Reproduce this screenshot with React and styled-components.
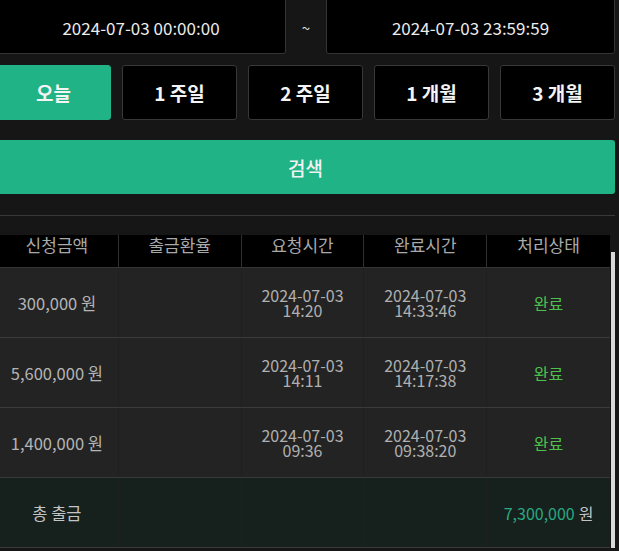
import { useLayoutEffect, useRef } from "react";
import styled, { createGlobalStyle } from "styled-components";

const GlobalStyle = createGlobalStyle`
  html, body {
    margin: 0;
    padding: 0;
    background: #161616;
    overflow: hidden;
  }
  body {
    font-family: "Noto Sans CJK KR", "Noto Sans", sans-serif;
    color: #d0d0d0;
  }
`;

const rows = [
  { amount: "300,000 원", reqDate: "2024-07-03", reqTime: "14:20", doneDate: "2024-07-03", doneTime: "14:33:46" },
  { amount: "5,600,000 원", reqDate: "2024-07-03", reqTime: "14:11", doneDate: "2024-07-03", doneTime: "14:17:38" },
  { amount: "1,400,000 원", reqDate: "2024-07-03", reqTime: "09:36", doneDate: "2024-07-03", doneTime: "09:38:20" },
];

const periods = ["오늘", "1 주일", "2 주일", "1 개월", "3 개월"];

function App() {
  const scrollRef = useRef(null);

  useLayoutEffect(() => {
    // the list is shown scrolled to its end
    if (scrollRef.current) {
      scrollRef.current.scrollTop = scrollRef.current.scrollHeight;
    }
  }, []);

  return (
    <Page>
      <GlobalStyle />
      <DateRow>
        <DateBox>2024-07-03 00:00:00</DateBox>
        <Tilde>~</Tilde>
        <DateBox>2024-07-03 23:59:59</DateBox>
      </DateRow>

      <PeriodRow>
        {periods.map((p, i) => (
          <PeriodButton key={p} $active={i === 0}>
            {p}
          </PeriodButton>
        ))}
      </PeriodRow>

      <SearchButton>검색</SearchButton>

      <Divider />

      <TableArea>
        <TableScroll ref={scrollRef}>
          <HeadRow>
            <HeadCell>신청금액</HeadCell>
            <HeadCell>출금환율</HeadCell>
            <HeadCell>요청시간</HeadCell>
            <HeadCell>완료시간</HeadCell>
            <HeadCell $last>처리상태</HeadCell>
          </HeadRow>

          {rows.map((r, i) => (
            <BodyRow key={i}>
              <Cell>{r.amount}</Cell>
              <Cell />
              <Cell>
                <TimeStack>
                  <span>{r.reqDate}</span>
                  <span>{r.reqTime}</span>
                </TimeStack>
              </Cell>
              <Cell>
                <TimeStack>
                  <span>{r.doneDate}</span>
                  <span>{r.doneTime}</span>
                </TimeStack>
              </Cell>
              <Cell $last>
                <Status>완료</Status>
              </Cell>
            </BodyRow>
          ))}

          <TotalRow>
            <Cell>
              <TotalLabel>총 출금</TotalLabel>
            </Cell>
            <Cell />
            <Cell />
            <Cell />
            <Cell $last>
              <TotalAmount>7,300,000</TotalAmount>
              <Won>원</Won>
            </Cell>
          </TotalRow>
          <EndSpace />
        </TableScroll>

        <ScrollTrack>
          <ScrollThumb />
        </ScrollTrack>
      </TableArea>
    </Page>
  );
}

export default App;

const Page = styled.div`
  width: 619px;
  margin-left: -4px;
  margin-top: -4px;
  display: flex;
  flex-direction: column;
`;

const DateRow = styled.div`
  display: grid;
  grid-template-columns: 290px 40px 1fr;
  height: 58px;
`;

const DateBox = styled.div`
  display: flex;
  align-items: center;
  justify-content: center;
  padding-top: 5px;
  box-sizing: border-box;
  background: #000;
  border: 1px solid #343434;
  border-radius: 3px;
  color: #ececec;
  font-size: 17px;
`;

const Tilde = styled.div`
  display: flex;
  align-items: center;
  justify-content: center;
  padding-top: 5px;
  color: #e0e0e0;
  font-size: 15px;
`;

const PeriodRow = styled.div`
  display: grid;
  grid-template-columns: repeat(5, 1fr);
  gap: 11px;
  margin-top: 11px;
`;

const PeriodButton = styled.button`
  height: 55px;
  border-radius: 3px;
  border: 1px solid ${(p) => (p.$active ? "#20b386" : "#383838")};
  background: ${(p) => (p.$active ? "#20b386" : "#000")};
  color: #f4f4f4;
  font-family: inherit;
  font-size: 19px;
  font-weight: 700;
  cursor: pointer;
`;

const SearchButton = styled.button`
  height: 54px;
  margin-top: 20px;
  border: none;
  border-radius: 3px;
  background: #20b386;
  color: #f2f2f2;
  font-family: inherit;
  font-size: 19px;
  font-weight: 500;
  cursor: pointer;
`;

const Divider = styled.div`
  height: 1px;
  margin-top: 21px;
  background: #393939;
`;

const TableArea = styled.div`
  display: flex;
  margin-top: 19px;
  height: 316px;
`;

const TableScroll = styled.div`
  flex: 1;
  overflow: hidden;
`;

const ScrollTrack = styled.div`
  width: 4px;
  padding-left: 1px;
  padding-top: 17px;
`;

const ScrollThumb = styled.div`
  height: 296px;
  background: #d9d9d9;
`;

const HeadRow = styled.div`
  display: grid;
  grid-template-columns: repeat(5, 1fr);
  height: 52px;
  background: #000;
  border-bottom: 1px solid #333;
  box-sizing: border-box;
`;

const HeadCell = styled.div`
  display: flex;
  align-items: center;
  justify-content: center;
  padding-top: 5px;
  color: #a9a9a9;
  font-size: 17px;
  border-right: ${(p) => (p.$last ? "none" : "1px solid #2f2f2f")};
`;

const BodyRow = styled.div`
  display: grid;
  grid-template-columns: repeat(5, 1fr);
  height: 70px;
  box-sizing: border-box;
  background: #232323;
  border-bottom: 1px solid #3a3a3a;
`;

const TotalRow = styled(BodyRow)`
  background: #16201d;
`;

const Cell = styled.div`
  display: flex;
  align-items: center;
  justify-content: center;
  gap: 4px;
  color: #b4b4b4;
  font-size: 16.5px;
  border-right: ${(p) => (p.$last ? "none" : "1px solid #1f1f1f")};
`;

const TimeStack = styled.div`
  display: flex;
  flex-direction: column;
  align-items: center;
  font-size: 16px;
  line-height: 15px;
  color: #b0b0b0;
`;

const Status = styled.span`
  color: #4cc24c;
  font-size: 16px;
`;

const TotalLabel = styled.span`
  color: #c4c4c4;
  font-size: 16.5px;
`;

const TotalAmount = styled.span`
  color: #2aa882;
  font-size: 16px;
`;

const Won = styled.span`
  color: #c4c4c4;
  font-size: 16px;
`;

const EndSpace = styled.div`
  height: 3px;
`;
